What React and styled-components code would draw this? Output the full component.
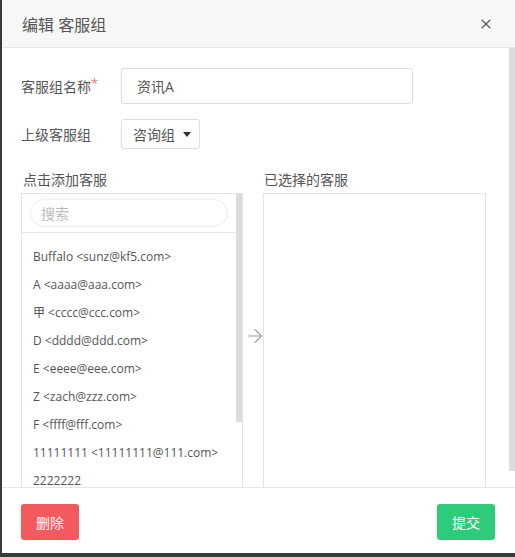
import React from 'react'
import styled, { createGlobalStyle } from 'styled-components'
import { X, ArrowRight } from 'lucide-react'

const GlobalStyle = createGlobalStyle`
html, body {
    margin:0;
    padding:0;
    background:#3a3a3a;
}
* { box-sizing:border-box; }
`

const font = `"Open Sans", "Noto Sans CJK SC", sans-serif`

const Modal = styled.div`
width:515px;
height:557px;
display:flex;
flex-direction:column;
background:#fff;
border-left:2px solid #3a3a3a;
border-bottom:4px solid #3a3a3a;
font-family:${font};
color:#555;
overflow:hidden;
`

const Header = styled.div`
height:48px;
flex-shrink:0;
display:flex;
align-items:center;
justify-content:space-between;
padding:0 21px 0 20px;
background:#f7f7f8;
border-bottom:1px solid #e6e6e6;
`

const Title = styled.h4`
margin:0;
font-size:16px;
font-weight:400;
color:#555;
`

const Close = styled.button`
border:none;
background:none;
padding:0;
display:flex;
color:#555;
cursor:pointer;
`

// fake scrollbars, since the headless browser hides native ones
const Scrollable = styled.div`
display:flex;
overflow:hidden;
height:${p => p.height}px;
flex-shrink:0;
`

const ScrollContent = styled.div`
flex:1;
min-width:0;
overflow:hidden;
`

const Track = styled.div`
width:6px;
flex-shrink:0;
background:#fff;
`

const Thumb = styled.div`
width:6px;
background:#dcdcdc;
`

const BodyInner = styled.div`
padding:20px 0 10px 19px;
`

const Row = styled.div`
display:flex;
align-items:center;
margin-bottom:${p => p.gap || 0}px;
`

const Label = styled.label`
width:100px;
font-size:14px;
color:#555;
`

const Star = styled.sup`
color:#f07575;
font-size:13px;
vertical-align:4px;
line-height:0;
`

const TextInput = styled.input`
width:292px;
height:36px;
border:1px solid #dcdcdc;
border-radius:3px;
padding:0 15px;
font-family:${font};
font-size:14px;
color:#555;
outline:none;
`

const SelectButton = styled.button`
height:30px;
display:flex;
align-items:center;
gap:8px;
padding:0 8px 0 11px;
background:#fff;
border:1px solid #dcdcdc;
border-radius:3px;
font-family:${font};
font-size:14px;
color:#555;
`

const Caret = styled.span`
width:0;
height:0;
border-left:4px solid transparent;
border-right:4px solid transparent;
border-top:5px solid #333;
`

const Transfer = styled.div`
display:grid;
grid-template-columns:222px 20px 223px;
margin-top:21px;
`

const Column = styled.div`
display:flex;
flex-direction:column;
`

const ColumnTitle = styled.div`
height:20px;
line-height:20px;
font-size:14px;
color:#555;
margin:0 0 3px ${p => p.indent || 1}px;
`

const ListBox = styled.div`
height:300px;
border:1px solid #e3e3e3;
display:flex;
overflow:hidden;
`

const SearchWrap = styled.div`
padding:5px 8px 5px 8px;
border-bottom:1px solid #e6e6e6;
`

const Search = styled.input`
width:100%;
height:28px;
border:1px solid #ececec;
border-radius:14px;
padding:0 10px;
font-family:${font};
font-size:14px;
outline:none;
&::placeholder { color:#bbb; }
`

const Items = styled.ul`
list-style:none;
margin:0;
padding:10px 0 0;
`

const Item = styled.li`
height:28px;
line-height:28px;
padding-left:11px;
font-size:12px;
color:#555;
white-space:nowrap;
`

const Middle = styled.div`
display:flex;
justify-content:center;
padding:155px 0 0 3px;
color:#999;

svg { flex-shrink:0; }
`

const Footer = styled.div`
flex:1;
display:flex;
justify-content:space-between;
align-items:flex-start;
padding:16px 20px 0 19px;
border-top:1px solid #e6e6e6;
`

const Button = styled.button`
width:58px;
height:36px;
border:none;
border-radius:3px;
background:${p => p.color};
color:#fff;
font-family:${font};
font-size:14px;
cursor:pointer;
`

const agents = [
    'Buffalo <sunz@kf5.com>',
    'A <aaaa@aaa.com>',
    '甲 <cccc@ccc.com>',
    'D <dddd@ddd.com>',
    'E <eeee@eee.com>',
    'Z <zach@zzz.com>',
    'F <ffff@fff.com>',
    '11111111 <11111111@111.com>',
    '2222222',
]

export default function App() {
    return (
        <>
            <GlobalStyle />
            <Modal>
                <Header>
                    <Title>编辑 客服组</Title>
                    <Close><X size={16} strokeWidth={1.6} /></Close>
                </Header>
                <Scrollable height={439}>
                    <ScrollContent>
                        <BodyInner>
                            <Row gap={15}>
                                <Label>客服组名称<Star>*</Star></Label>
                                <TextInput defaultValue="资讯A" />
                            </Row>
                            <Row>
                                <Label>上级客服组</Label>
                                <SelectButton>咨询组<Caret /></SelectButton>
                            </Row>
                            <Transfer>
                                <Column>
                                    <ColumnTitle indent={2}>点击添加客服</ColumnTitle>
                                    <ListBox>
                                        <ScrollContent>
                                            <SearchWrap>
                                                <Search placeholder="搜索" />
                                            </SearchWrap>
                                            <Items>
                                                {agents.map(a => <Item key={a}>{a}</Item>)}
                                            </Items>
                                        </ScrollContent>
                                        <Track><Thumb style={{ height: 228 }} /></Track>
                                    </ListBox>
                                </Column>
                                <Middle><ArrowRight size={22} strokeWidth={1.2} /></Middle>
                                <Column>
                                    <ColumnTitle>已选择的客服</ColumnTitle>
                                    <ListBox />
                                </Column>
                            </Transfer>
                        </BodyInner>
                    </ScrollContent>
                    <Track><Thumb style={{ height: 423 }} /></Track>
                </Scrollable>
                <Footer>
                    <Button color="#f25a5d">删除</Button>
                    <Button color="#2ecb7b">提交</Button>
                </Footer>
            </Modal>
        </>
    )
}
